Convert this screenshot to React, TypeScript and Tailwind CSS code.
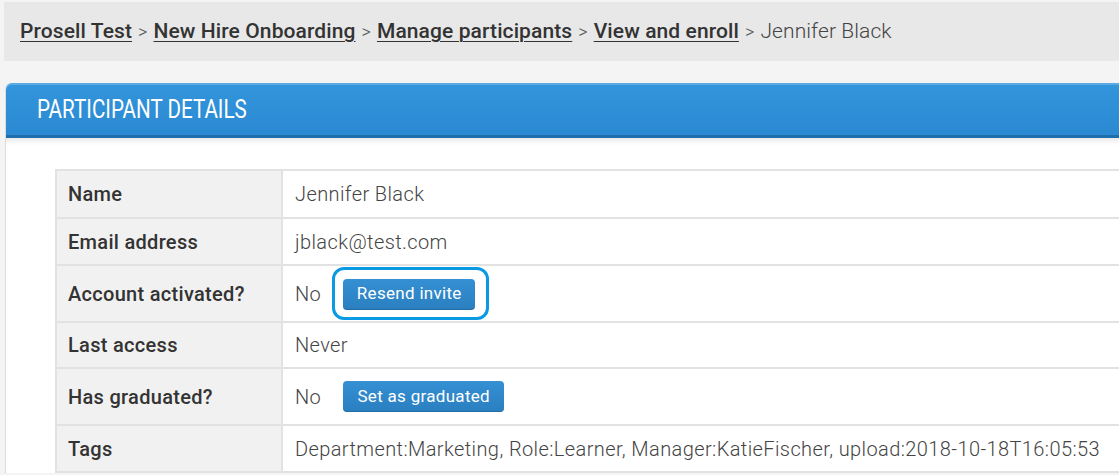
import React from "react";

const btn =
  "h-[31px] rounded-[4px] bg-gradient-to-b from-[#3590d3] to-[#2a7fc0] text-[17px] tracking-[0.3px] font-normal text-white shadow-[inset_0_-1px_0_rgba(0,0,0,0.15)]";

const rows: { label: string; value: React.ReactNode; h: string }[] = [
  { label: "Name", value: "Jennifer Black", h: "h-[48px]" },
  { label: "Email address", value: "jblack@test.com", h: "h-[47px]" },
  {
    label: "Account activated?",
    value: (
      <div className="flex items-center">
        <span>No</span>
        <div className="ml-[11px] rounded-[12px] border-[3px] border-[#0a9ae4] py-[7px] pl-[8px] pr-[11px]">
          <button className={`${btn} w-[132px]`}>Resend invite</button>
        </div>
      </div>
    ),
    h: "h-[57px]",
  },
  { label: "Last access", value: "Never", h: "h-[46px]" },
  {
    label: "Has graduated?",
    value: (
      <div className="flex items-center">
        <span>No</span>
        <button className={`${btn} ml-[22px] w-[161px]`}>Set as graduated</button>
      </div>
    ),
    h: "h-[57px]",
  },
  {
    label: "Tags",
    value:
      "Department:Marketing, Role:Learner, Manager:KatieFischer, upload:2018-10-18T16:05:53",
    h: "h-[47px]",
  },
];

const Sep = () => <span className="mx-[6px] text-[18px] font-light text-[#555]">&gt;</span>;
const Link = ({ children }: { children: React.ReactNode }) => (
  <a className="font-medium underline decoration-1 underline-offset-[3px]">{children}</a>
);

export default function App() {
  return (
    <div
      className="relative h-[475px] w-[1119px] overflow-hidden bg-[#f4f4f4]"
      style={{ fontFamily: "Roboto, 'Noto Sans', sans-serif" }}
    >
      <div className="ml-[4px] mt-[2px] flex h-[59px] w-[1200px] items-center bg-[#e8e8e8] pl-[16px] text-[21px] tracking-[0.1px] text-[#333]">
        <Link>Prosell Test</Link>
        <Sep />
        <Link>New Hire Onboarding</Link>
        <Sep />
        <Link>Manage participants</Link>
        <Sep />
        <Link>View and enroll</Link>
        <Sep />
        <span className="font-light text-[#444]">Jennifer Black</span>
      </div>

      <div className="ml-[5px] mt-[22px] w-[1200px] rounded-tl-[6px] border-l border-[#ddd] bg-white">
        <div className="flex h-[55px] items-center rounded-tl-[6px] border-b-[3px] border-[#1d6eab] bg-gradient-to-b from-[#3395db] to-[#2a89d2] pl-[31px] pt-[2px] shadow-[inset_0_2px_0_rgba(255,255,255,0.2)]">
          <span className="origin-left scale-x-[0.825] whitespace-nowrap text-[25px] font-normal text-white">
            PARTICIPANT DETAILS
          </span>
        </div>
        <div className="pl-[49px] pt-[31px] shadow-[inset_0_6px_6px_-4px_rgba(0,0,0,0.12)]">
          <div className="w-[1140px] border-l-2 border-t-2 border-[#e2e2e2]">
            {rows.map((r) => (
              <div key={r.label} className={`flex ${r.h} border-b-2 border-[#e2e2e2]`}>
                <div className="flex w-[226px] shrink-0 items-center border-r-2 border-[#e2e2e2] bg-[#f1f1f1] pl-[11px] text-[20px] font-medium tracking-[0.3px] text-[#333]">
                  {r.label}
                </div>
                <div className="flex flex-1 items-center whitespace-nowrap pl-[12px] text-[20px] font-light tracking-[0.4px] text-[#444]">
                  {r.value}
                </div>
              </div>
            ))}
          </div>
        </div>
      </div>
    </div>
  );
}
